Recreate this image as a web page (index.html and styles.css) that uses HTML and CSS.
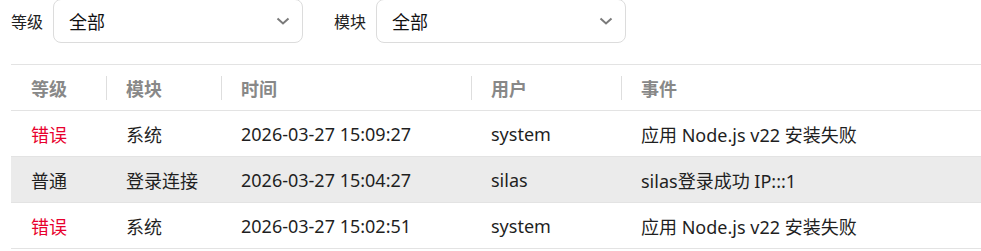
FILE: index.html
```html
<!DOCTYPE html>
<html lang="zh-CN">
<head>
<meta charset="utf-8">
<link rel="stylesheet" href="styles.css">
</head>
<body>
<div class="page">
  <div class="filters">
    <label class="filter-label">等级</label>
    <div class="select">
      <span class="select-value">全部</span>
      <svg class="chevron" width="14" height="8" viewBox="0 0 14 8"><path d="M1.5 1.5 L7 6.5 L12.5 1.5" fill="none" stroke="#7a7a7a" stroke-width="2"/></svg>
    </div>
    <label class="filter-label second">模块</label>
    <div class="select">
      <span class="select-value">全部</span>
      <svg class="chevron" width="14" height="8" viewBox="0 0 14 8"><path d="M1.5 1.5 L7 6.5 L12.5 1.5" fill="none" stroke="#7a7a7a" stroke-width="2"/></svg>
    </div>
  </div>
  <table class="log-table">
    <colgroup>
      <col class="c-level"><col class="c-module"><col class="c-time"><col class="c-user"><col>
    </colgroup>
    <thead>
      <tr><th>等级</th><th><span class="sep"></span>模块</th><th><span class="sep"></span>时间</th><th><span class="sep"></span>用户</th><th><span class="sep"></span>事件</th></tr>
    </thead>
    <tbody>
      <tr><td class="err">错误</td><td>系统</td><td>2026-03-27 15:09:27</td><td>system</td><td>应用 Node.js v22 安装失败</td></tr>
      <tr class="striped"><td>普通</td><td>登录连接</td><td>2026-03-27 15:04:27</td><td>silas</td><td>silas登录成功 IP:::1</td></tr>
      <tr><td class="err">错误</td><td>系统</td><td>2026-03-27 15:02:51</td><td>system</td><td>应用 Node.js v22 安装失败</td></tr>
    </tbody>
  </table>
</div>
</body>
</html>
```
FILE: styles.css
```css
* { box-sizing: border-box; }
html, body { margin: 0; padding: 0; background: #fff; }
body {
  font-family: "Noto Sans", "Noto Sans CJK SC", sans-serif;
  color: #1f1f1f;
}
.page { padding-left: 11px; }
.filters {
  display: flex;
  align-items: center;
  height: 44px;
  margin-top: -1px;
}
.filter-label {
  font-size: 16px;
  color: #222;
  margin-right: 10px;
}
.filter-label.second { margin-left: 31px; }
.select {
  width: 250px;
  height: 44px;
  border: 1px solid #dcdcdc;
  border-radius: 8px;
  display: flex;
  align-items: center;
  justify-content: space-between;
  padding: 0 12px 0 15px;
}
.select-value { font-size: 18px; color: #111; }
.chevron { display: block; }
.log-table {
  margin-top: 21px;
  width: 970px;
  border-collapse: collapse;
  table-layout: fixed;
  font-size: 18px;
}
.c-level { width: 95px; }
.c-module { width: 115px; }
.c-time { width: 250px; }
.c-user { width: 150px; }
.log-table th, .log-table td {
  height: 46px;
  padding: 0 0 0 20px;
  text-align: left;
  white-space: nowrap;
  border-top: 1px solid #e3e3e3;
  border-bottom: 1px solid #e3e3e3;
}
.log-table th {
  position: relative;
  font-weight: 700;
  color: #888;
}
.sep {
  position: absolute;
  left: 0;
  top: 11px;
  width: 1px;
  height: 24px;
  background: #dedede;
}
.log-table td { color: #1f1f1f; }
.log-table td.err { color: #e8002d; }
.striped td { background: #ebebeb; }
```
